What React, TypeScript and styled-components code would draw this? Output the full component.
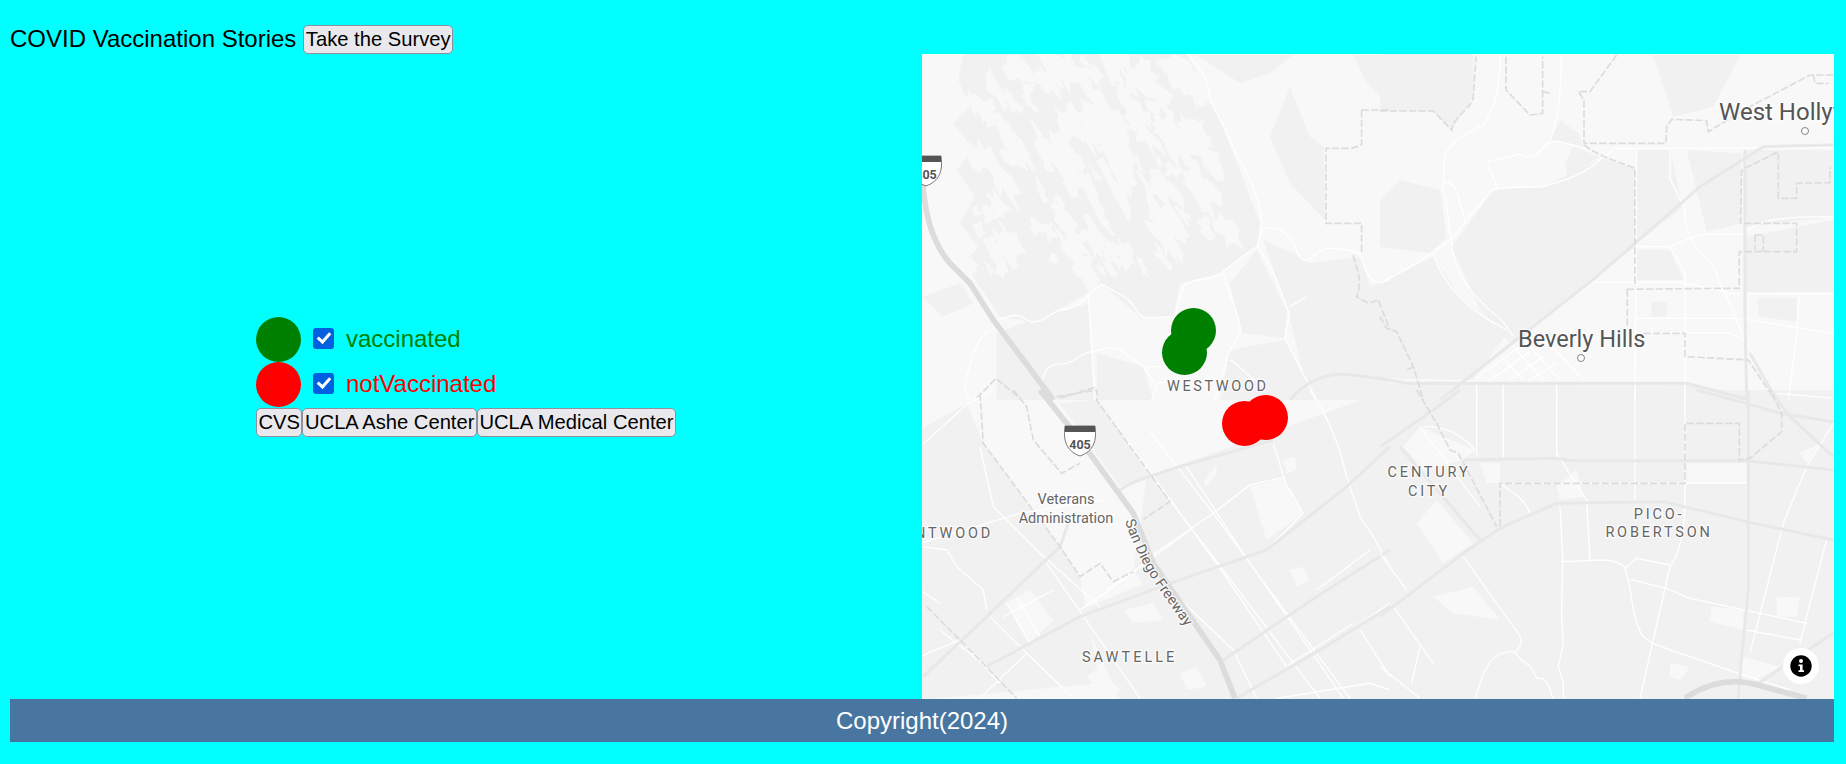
import React from 'react'
import styled, { createGlobalStyle } from 'styled-components'

const GlobalStyle = createGlobalStyle`
  html, body {
    margin: 0;
    background: #00ffff;
    font-family: 'Liberation Sans', Arial, sans-serif;
  }
`

const Page = styled.div`
  width: 1824px;
  height: 764px;
  margin-left: 10px;
  display: flex;
  flex-direction: column;
`

const Header = styled.header`
  height: 54px;
  padding-top: 25px;
  box-sizing: border-box;
  display: flex;
  align-items: flex-start;
  gap: 7px;
`

const Title = styled.span`
  font-size: 24px;
  line-height: 27px;
  color: #000;
`

const Button = styled.button`
  font: 20.2px 'Liberation Sans', Arial, sans-serif;
  height: 29px;
  padding: 0 1.5px;
  color: #000;
  background: #e9e9ed;
  border: 1px solid #8f8f9d;
  border-radius: 5px;
`

const Main = styled.main`
  display: grid;
  grid-template-columns: 912px 912px;
  height: 645px;
`

const LegendPanel = styled.section`
  display: flex;
  align-items: center;
  justify-content: center;
`

const Legend = styled.div`
  display: flex;
  flex-direction: column;
`

const LegendRow = styled.label`
  display: flex;
  align-items: center;
  height: 45px;
  gap: 12px;
  font-size: 24px;
  color: ${(props) => props.color};
`

const Dot = styled.span`
  width: 45px;
  height: 45px;
  border-radius: 50%;
  background: ${(props) => props.color};
`

const Check = styled.input`
  appearance: none;
  position: relative;
  width: 21px;
  height: 21px;
  margin: -2px 0 0;
  border-radius: 3px;
  background: #0060df;
  &::after {
    content: '';
    position: absolute;
    left: 7px;
    top: 2.5px;
    width: 5px;
    height: 10px;
    border: solid #fff;
    border-width: 0 3px 3px 0;
    transform: rotate(42deg);
  }
`

const Locations = styled.div`
  display: flex;
  margin-top: 1px;
`

const MapFrame = styled.section`
  position: relative;
  overflow: hidden;
  background: #f8f8f8;
`

const MapDrawing = styled.svg`
  display: block;
  width: 912px;
  height: 645px;
`

const Land = styled.path`
  fill: ${(props) => props.fill || '#f1f1f1'};
`

const Minor = styled.path`
  fill: none;
  stroke: #fff;
  stroke-width: 4;
`

const Major = styled.path`
  fill: none;
  stroke: #e8e8e8;
  stroke-width: 9;
`

const Freeway = styled.path`
  fill: none;
  stroke: #dcdcdc;
  stroke-width: 17;
`

const Border = styled.path`
  fill: none;
  stroke: #dcdcdc;
  stroke-width: 5;
  stroke-dasharray: 22 7;
`

const Label = styled.text`
  font-family: Roboto, sans-serif;
  font-size: ${(props) => props.$size || 14.5}px;
  letter-spacing: ${(props) => props.$spacing || 0}px;
  fill: ${(props) => props.$ink || '#666'};
  stroke: #fff;
  stroke-width: 2.5px;
  stroke-opacity: 0.8;
  paint-order: stroke;
`

const Pin = styled.span`
  position: absolute;
  width: 45px;
  height: 45px;
  border-radius: 50%;
  left: ${(props) => props.$x - 922 - 22.5}px;
  top: ${(props) => props.$y - 54 - 22.5}px;
  background: ${(props) => props.color};
`

const InfoBadge = styled.span`
  position: absolute;
  left: 861px;
  top: 594px;
  width: 36px;
  height: 36px;
  border-radius: 50%;
  background: #fff;
  display: flex;
  align-items: center;
  justify-content: center;
`

const Footer = styled.footer`
  height: 43px;
  line-height: 43px;
  text-align: center;
  font-size: 24px;
  color: #fff;
  background: #4876a0;
`

type Tile = {
  x: number
  y: number
  dark?: string[]
  light?: string[]
  minor: string[]
  major: string[]
  freeway?: string[]
  border: string[]
}

// small repeatable noise so the hill texture stays the same on every load
let seed = 20240
const noise = () => {
  seed = (seed * 1664525 + 1013904223) % 4294967296
  return seed / 4294967296
}

// one jagged blotch, stretched along the north-west to south-east ridges
const blotch = (cx: number, cy: number, long: number, wide: number) => {
  const points: string[] = []
  for (let i = 0; i < 13; i++) {
    const angle = (i / 13) * Math.PI * 2
    const jitter = 0.35 + noise() * 1.15
    const a = Math.cos(angle) * long * jitter
    const b = Math.sin(angle) * wide * jitter
    points.push(`${Math.round(cx + a * 0.5 - b * 0.85)} ${Math.round(cy + a * 0.85 + b * 0.5)}`)
  }
  return `M${points.join(' L')} Z`
}

const hillBlotches = () => {
  const out: string[] = []
  for (let i = 0; i < 190; i++) {
    const x = 150 + noise() * 850
    const y = 20 + noise() * 650
    const limitX = 800 + (y / 590) * 210
    if (x > limitX || y > 690 - (x > 700 ? (x - 700) * 0.3 : 0)) continue
    if (x > 560 && y > 420 && noise() < 0.6) continue
    const big = noise() < 0.25
    out.push(blotch(x, y, (big ? 60 : 20) + noise() * 40, (big ? 22 : 8) + noise() * 18))
  }
  return out
}

// every tile is traced at 3x, so its paths are scaled back down by the group
const tiles: Tile[] = [
  {
    x: 920,
    y: 50,
    dark: [
      'M130 10 L800 10 L870 140 L940 310 L1020 520 L1010 590 L900 670 L780 700 L760 800 L660 800 L545 702 L420 778 L350 820 L240 800 L160 680 L130 640 L175 590 L120 520 L165 440 L110 360 L160 300 L100 220 L150 170 L115 90 Z',
      'M830 15 L1120 15 L1050 70 L960 100 L900 60 Z',
      'M1110 110 L1170 260 L1212 290 L1215 510 L1110 400 L1050 260 Z',
      'M1300 15 L1410 15 L1410 170 L1340 100 Z',
      'M1030 570 L1120 610 L1170 640 L1320 620 L1350 710 L1410 690 L1410 1050 L1170 1050 L1100 770 Z',
      'M230 850 L320 815 L505 760 L525 1050 L230 1050 Z',
      'M530 910 L670 950 L700 1050 L530 1050 Z',
      'M930 900 L1095 870 L1190 1050 L900 1050 Z',
      'M930 700 L1010 600 L1100 780 L1095 865 L965 850 Z',
      'M8 740 L120 700 L160 760 L70 800 Z',
    ],
    light: hillBlotches(),
    minor: [
      'M800 10 C840 50 865 90 870 140 C880 190 910 210 930 270 C945 320 990 370 1010 440 C1025 490 1030 520 1020 560 L1012 590',
      'M1020 540 C1060 525 1090 535 1115 570 C1135 610 1140 640 1170 630 C1200 590 1230 585 1320 610 C1345 680 1350 710 1410 690',
      'M1012 590 C960 620 930 650 900 672 C870 695 820 680 790 710 L765 800 C700 800 680 815 655 790 C630 740 600 735 545 702 C500 735 470 785 420 778 C390 790 360 830 320 810 C290 780 250 810 235 808',
      'M1012 590 C1060 650 1080 720 1108 790 L1095 865 L1190 1050',
      'M910 672 C930 740 960 800 962 845 C950 880 920 900 915 950 L885 1050',
      'M505 740 L525 1050',
      'M210 840 C170 860 150 930 135 1010 L145 1050',
      'M365 990 C380 960 380 940 440 940 C480 925 490 905 520 905 C550 900 570 885 600 900 L670 950 L770 950',
      'M670 950 L710 1010 L695 1050',
      'M740 995 L710 1000',
      'M930 930 C960 940 970 980 1040 1010',
      'M1108 770 L1160 740',
    ],
    major: ['M1110 1050 C1160 990 1220 965 1300 975 L1410 990'],
    freeway: ['M8 400 C15 480 30 570 90 640 L150 700 L220 810 L400 1050'],
    border: [
      'M1325 180 L1410 180',
      'M1325 180 L1325 285 L1295 295 L1218 295 L1218 520 L1325 520 L1325 610',
      'M1300 615 C1310 660 1330 690 1310 740 L1345 760 L1375 750 L1410 840',
      'M170 1045 L228 985 L300 1045',
      'M420 1045 L525 1012',
    ],
  },
  {
    x: 1380,
    y: 50,
    dark: [
      'M0 10 L280 10 L280 140 L215 240 L160 183 L0 183 Z',
      'M215 590 L340 420 L490 410 L665 325 L765 355 L765 590 L640 690 L390 880 L300 780 Z',
      'M0 450 L60 390 L180 420 L200 560 L150 610 L0 590 Z',
      'M0 700 L160 620 L240 740 L380 850 L280 990 L0 985 Z',
      'M770 300 L870 300 L910 470 L770 580 Z',
      'M820 15 L1080 15 L1000 170 L880 200 Z',
      'M1100 300 L1360 300 L1360 500 L1100 530 Z',
      'M1100 560 L1360 510 L1360 725 L1100 725 Z',
      'M920 300 L1085 310 L1085 520 L980 545 Z',
      'M555 340 L580 290 L660 320 L560 380 Z',
      'M510 270 L540 210 L595 250 L610 290 Z',
      'M770 600 L870 600 L910 690 L770 690 Z',
      'M0 1000 L920 1005 L1100 1050 L0 1050 Z',
      'M1135 745 L1250 745 L1250 815 L1135 800 Z',
      'M815 755 H862 V800 H815 Z',
    ],
    minor: [
      'M360 15 C360 100 350 170 310 225 C270 245 230 260 195 310 C190 350 195 380 188 410 C205 470 205 520 215 580 C220 660 260 720 340 790 C370 810 380 830 400 860',
      'M0 700 C100 650 170 600 210 570 C260 520 300 450 340 420 C380 405 440 415 490 410 C560 390 620 370 665 325 L705 295 L1360 292',
      'M188 405 C200 390 220 395 232 430 L255 510',
      'M160 615 C190 700 260 780 380 840',
      'M350 415 C345 380 320 350 325 335 C350 325 390 325 415 312 C440 320 460 330 480 305 C500 280 510 270 540 275 L620 295',
      'M545 15 C540 100 545 180 510 270',
      'M770 295 L765 1050',
      'M870 295 L870 385 L915 480 C910 540 940 590 1000 650 C1020 680 1015 710 1040 740 L1090 860 L1110 900',
      'M770 590 L870 590 L915 670 L915 1050',
      'M870 590 C920 570 950 550 1000 552 L1090 552',
      'M1100 540 C1150 510 1190 500 1360 500',
      'M620 697 L900 697 C950 710 1000 710 1050 730 L1360 732',
      'M765 805 L1080 805 L1360 850',
      'M765 848 L1050 848 L1090 870',
      'M1258 735 L1250 850 L1225 1050',
      'M280 990 L420 890',
      'M330 990 L450 905',
      'M390 990 L490 920',
      'M450 990 L530 940',
      'M400 890 L490 990',
      'M440 880 L540 990',
      'M480 850 L610 990',
      'M360 915 L430 990',
      'M290 1005 V1050',
      'M370 1005 V1050',
      'M530 1005 V1050',
      'M1190 1030 L1360 1045',
    ],
    major: [
      'M180 1050 L650 680 L960 410 L1150 290 L1360 285',
      'M1095 300 L1095 780 L1100 1050',
      'M0 985 L80 1000 L920 1000 L1110 1050',
      'M1110 910 L1190 1050',
    ],
    border: [
      'M0 183 L160 183 L215 240 C220 200 280 170 280 140 L288 20',
      'M378 20 L378 120 L450 195 L488 190 L488 20',
      'M488 125 L510 130',
      'M710 15 L630 125 L595 125 L612 150 L612 280 L858 280 L860 230 L875 208 L980 212 L985 245 L1100 175 L1290 75 L1360 75',
      'M612 285 C660 320 700 330 765 355 L765 710',
      'M740 718 L1020 715 L1078 715 L1078 605 L1250 605 L1250 520 L1082 520 L1085 360 L1195 305 L1195 445 L1250 445 L1250 400 L1350 398 L1350 350',
      'M1125 555 L1150 555 L1150 605 M1125 555 V600',
      'M742 718 V830',
      'M790 850 L915 850 L915 920 L1105 930 L1185 1050',
      'M0 800 L20 835 L50 845 L100 950 L130 1050',
      'M80 960 L100 950',
      'M1300 75 L1305 100 L1345 100',
    ],
  },
  {
    x: 920,
    y: 390,
    dark: [
      'M0 120 L140 40 L190 160 L420 470 L480 560 L540 880 L0 930 Z',
      'M420 40 L530 30 L690 260 L600 290 Z',
      'M680 260 L1410 0 L1410 930 L900 930 L640 540 Z',
      'M480 660 L700 570 L900 930 L600 930 Z',
    ],
    light: [
      'M990 290 L1090 265 L1150 370 L1040 450 Z',
      'M1110 540 L1150 530 L1170 570 L1130 590 Z',
      'M610 660 L700 640 L730 690 L640 700 Z',
      'M260 640 L330 600 L400 690 L330 760 Z',
      'M1090 210 L1125 200 L1130 240 L1100 250 Z',
      'M850 280 L890 220 L890 250 L860 290 Z',
      'M500 860 L540 830 L600 900 L550 925 Z',
      'M780 850 L830 830 L860 890 L800 900 Z',
    ],
    minor: [
      'M690 125 L880 370 L1100 670 L1290 925',
      'M800 230 L970 490 L1170 780 L1270 925',
      'M700 260 L890 520 L1100 830',
      'M620 150 L780 370 L985 640 L1200 925',
      'M750 600 L940 780 L1010 925',
      'M880 370 L990 285 L1090 262',
      'M690 500 L880 370',
      'M1060 165 C1080 210 1090 280 1110 300 L1150 370',
      'M1170 0 C1220 70 1260 170 1280 260 L1320 380 L1360 440 L1410 530',
      'M145 40 L0 170',
      'M145 40 L220 0',
      'M180 170 L220 350 L360 490 L540 650',
      'M0 470 L80 480 L110 530 L190 600 L200 660',
      'M0 460 L300 370 L550 330',
      'M210 680 L320 790 L460 925',
      'M380 520 L560 780 L660 925',
      'M320 790 L180 925',
      'M480 660 L540 620 L690 510',
      'M1320 720 L1410 860',
      'M810 420 L730 480 L560 600',
      'M1040 480 L1150 370',
      'M1190 600 L1350 480',
      'M1270 735 L1410 640',
      'M1105 825 L1300 700',
      'M260 640 L330 760',
      'M290 620 L360 740',
      'M250 680 L400 600',
      'M0 800 L120 750 L240 880',
      'M60 720 L200 830',
      'M0 600 L60 640',
      'M1070 925 L1350 880 L1410 900',
    ],
    major: [
      'M600 300 C640 270 680 265 760 235 L1060 150',
      'M10 860 L200 680 L420 470 L445 400',
      'M200 830 L480 680 L750 580 L1040 480 L1280 290 L1410 170',
      'M910 810 L1190 620 L1410 480',
      'M950 925 L1200 780 L1410 650',
    ],
    freeway: ['M360 0 L480 150 L640 370 L700 520 L900 810 L945 925'],
    border: [
      'M280 0 L320 50 L340 150 L425 250 L480 220',
      'M180 10 L190 160 L420 470 L480 560 L540 520 L580 575 L640 545',
      'M410 20 L530 0 L530 30 L750 335 L670 388',
      'M20 650 L130 760 L290 925',
    ],
  },
  {
    x: 1380,
    y: 390,
    dark: ['M0 0 L1360 0 L1360 930 L0 930 Z'],
    light: [
      'M70 170 L120 110 L285 180 L250 210 L130 240 Z',
      'M110 400 L170 330 L280 460 L190 520 Z',
      'M160 620 L280 590 L360 690 L220 670 Z',
      'M920 220 L1100 220 L1100 280 L920 280 Z',
      'M300 220 L360 220 L360 280 L320 280 Z',
      'M1190 620 L1260 620 L1250 680 L1190 680 Z',
      'M995 650 L1090 660 L1090 720 L990 695 Z',
      'M1085 800 L1200 830 L1130 870 L1085 860 Z',
      'M870 820 L930 830 L900 870 L870 860 Z',
      'M1260 190 L1320 160 L1280 220 Z',
      'M530 290 L590 240 L610 320 L540 330 Z',
    ],
    minor: [
      'M290 0 V200',
      'M370 0 V210',
      'M530 0 V200',
      'M765 0 V330',
      'M915 0 V330 C915 430 900 490 870 530 L780 925',
      'M530 190 L620 330 L630 510',
      'M540 350 L548 500 L545 680 L550 760 L535 830 L550 880 V925',
      'M548 515 L660 510 C700 510 730 520 735 535 L770 505 L870 525',
      'M735 535 C760 600 750 680 790 740 L820 762 L1075 850 L1230 900',
      'M750 568 L860 595 L930 625 L1280 700',
      'M1100 720 L1260 750',
      'M1210 400 L1110 790',
      'M1280 230 L1210 400',
      'M1340 450 L1290 640 L1260 760',
      'M250 500 L400 710 C430 740 430 770 405 785 C370 785 340 790 310 850 L285 925',
      'M405 785 C420 820 450 810 470 865 C500 860 510 890 518 925',
      'M0 490 L80 600',
      'M40 650 L160 820',
      'M120 770 L95 880',
      'M0 830 L120 925',
      'M360 280 C400 310 430 320 450 370',
      'M130 110 C200 110 240 130 285 180',
      'M120 110 L300 350',
      'M370 280 L1100 280',
      'M1110 395 L1360 450',
      'M1360 100 L1280 230',
    ],
    major: [
      'M0 680 L250 490 L360 415 L530 340 L850 335 L1100 395 L1360 450',
      'M250 210 L530 205 L580 212 L1100 212 L1360 240',
      'M1105 0 L1105 600 L1085 800 L1075 925',
      'M0 170 L160 60 L240 0',
      'M60 170 L300 450',
      'M950 0 L1100 40 L1200 70 L1360 95',
      'M1170 0 L1230 80 L1360 200',
      'M1120 890 L1360 730',
    ],
    freeway: ['M915 925 C980 880 1060 860 1150 890 L1280 925'],
    border: [
      'M110 0 L170 100 L210 180 L235 190 L350 410',
      'M360 410 V280 L915 280 V100 L1078 100 L1078 210 L1110 205 L1205 125 L1205 70 L1170 0',
    ],
  },
]

const Shield = ({ x, y }: { x: number; y: number }) => (
  <g transform={`translate(${x} ${y})`}>
    <path
      d='M-15 -14 H15 C17 0 14 11 0 16 C-14 11 -17 0 -15 -14 Z'
      fill='#fff'
      stroke='#555'
      strokeWidth='0.8'
    />
    <path d='M-15 -14 H15 V-8 H-15 Z' fill='#555' />
    <text
      x='0'
      y='9'
      textAnchor='middle'
      fontFamily='Roboto, sans-serif'
      fontWeight='700'
      fontSize='12.5'
      fill='#555'
    >
      405
    </text>
  </g>
)

const CityDot = ({ x, y }: { x: number; y: number }) => (
  <circle cx={x} cy={y} r='3.5' fill='#fff' stroke='#666' strokeWidth='0.8' />
)

const CityMap = () => (
  <MapDrawing viewBox='922 54 912 645'>
    {tiles.map((tile) => (
      <g
        key={`${tile.x}-${tile.y}`}
        transform={`translate(${tile.x} ${tile.y}) scale(0.3333)`}
      >
        {tile.dark?.map((d) => <Land key={d} d={d} />)}
        {tile.light?.map((d) => <Land key={d} d={d} fill='#f8f8f8' />)}
      </g>
    ))}
    {tiles.map((tile) => (
      <g
        key={`${tile.x}-${tile.y}`}
        transform={`translate(${tile.x} ${tile.y}) scale(0.3333)`}
      >
        {tile.minor.map((d) => <Minor key={d} d={d} />)}
        {tile.major.map((d) => <Major key={d} d={d} />)}
        {tile.freeway?.map((d) => <Freeway key={d} d={d} />)}
        {tile.border.map((d) => <Border key={d} d={d} />)}
      </g>
    ))}
    <Shield x={926} y={170} />
    <Shield x={1080} y={440} />
    <CityDot x={1805} y={131} />
    <CityDot x={1581} y={358} />
    <Label x={1719} y={120} $size={24} $ink='#555'>West Hollywood</Label>
    <Label x={1518} y={347} $size={23.5} $ink='#555'>Beverly Hills</Label>
    <Label x={1167} y={391} $spacing={2.6}>WESTWOOD</Label>
    <Label x={1066} y={504} textAnchor='middle'>Veterans</Label>
    <Label x={1066} y={523} textAnchor='middle'>Administration</Label>
    <Label x={993} y={538} textAnchor='end' $spacing={2.8}>NTWOOD</Label>
    <Label x={1082} y={662} $spacing={3}>SAWTELLE</Label>
    <Label x={1429} y={477} textAnchor='middle' $spacing={2.8}>CENTURY</Label>
    <Label x={1429} y={496} textAnchor='middle' $spacing={2.8}>CITY</Label>
    <Label x={1659} y={519} textAnchor='middle' $spacing={2.8}>PICO-</Label>
    <Label x={1659} y={537} textAnchor='middle' $spacing={2.8}>ROBERTSON</Label>
    <defs>
      <path id='freeway-label' d='M1125 521 C1133 545 1143 565 1154 582 L1192 636' />
    </defs>
    <Label $size={14.5}>
      <textPath href='#freeway-label'>San Diego Freeway</textPath>
    </Label>
  </MapDrawing>
)

const App = () => (
  <>
    <GlobalStyle />
    <Page>
      <Header>
        <Title>COVID Vaccination Stories</Title>
        <Button>Take the Survey</Button>
      </Header>
      <Main>
        <LegendPanel>
          <Legend>
            <LegendRow color='green'>
              <Dot color='green' />
              <Check type='checkbox' defaultChecked />
              vaccinated
            </LegendRow>
            <LegendRow color='red'>
              <Dot color='red' />
              <Check type='checkbox' defaultChecked />
              notVaccinated
            </LegendRow>
            <Locations>
              <Button>CVS</Button>
              <Button>UCLA Ashe Center</Button>
              <Button>UCLA Medical Center</Button>
            </Locations>
          </Legend>
        </LegendPanel>
        <MapFrame>
          <CityMap />
          <Pin color='green' $x={1193} $y={330} />
          <Pin color='green' $x={1184} $y={352} />
          <Pin color='red' $x={1265} $y={417} />
          <Pin color='red' $x={1244} $y={423} />
          <InfoBadge>
            <svg width='22' height='22' viewBox='0 0 22 22'>
              <circle cx='11' cy='11' r='10.7' fill='#000' />
              <circle cx='11' cy='6' r='2' fill='#fff' />
              <path d='M8.5 9.5 H12.6 V15.2 H14 V17 H8.5 V15.2 H10 V11.2 H8.5 Z' fill='#fff' />
            </svg>
          </InfoBadge>
        </MapFrame>
      </Main>
      <Footer>Copyright(2024)</Footer>
    </Page>
  </>
)

export default App
